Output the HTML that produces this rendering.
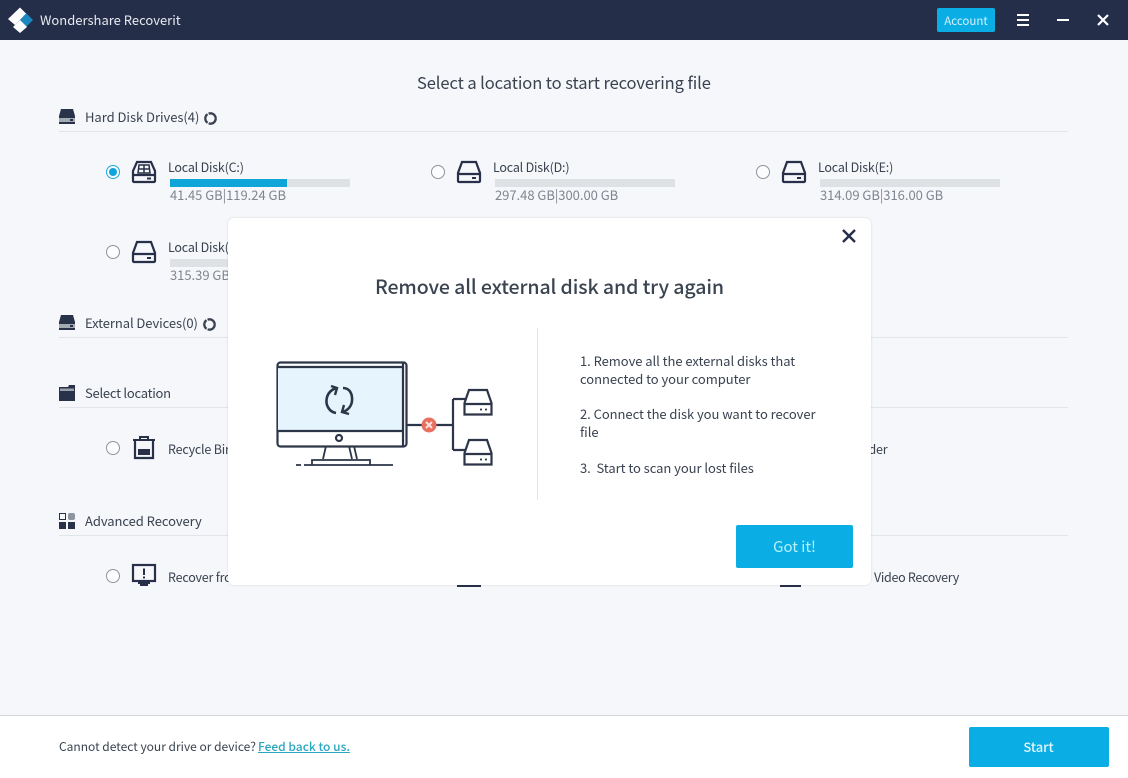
<!DOCTYPE html>
<html><head><meta charset="utf-8">
<style>
html,body{margin:0;padding:0}
body{width:1128px;height:778px;position:relative;overflow:hidden;background:#f5f7fa;font-family:"Noto Sans CJK SC","Liberation Sans",sans-serif;color:#3a4250}
.t{position:absolute;white-space:nowrap;line-height:20px;font-size:13px;letter-spacing:0}
.d{font-size:12.5px;letter-spacing:-.2px}
.g{color:#80868f}
.l{font-size:13px;letter-spacing:-.05px;left:580px}
.hl{position:absolute;left:59px;width:1009px;height:1px;background:#e1e4e8}
.bar{position:absolute;width:180px;height:8px;background:#dfe2e5}
.r{position:absolute;width:12px;height:12px;border:1px solid #8f949b;border-radius:50%;background:#fbfcfd}
svg{position:absolute;overflow:visible}
</style></head><body>

<div style="position:absolute;left:0;top:0;width:1128px;height:40px;background:#242e49"></div>
<svg style="left:0;top:0" width="40" height="40"><path d="M26 13l7 7-7 7-7-7z" fill="#1d88c0"/><path d="M20 7.500l6 6L15 25l-7-6z" fill="#fff"/><path d="M20 20l7 7-7 6-7-6z" fill="#fff"/></svg>
<div class="t" style="left:40px;top:10px;color:#e6e9ee">Wondershare Recoverit</div>
<div style="position:absolute;left:937px;top:8px;width:58px;height:24px;background:#0aaee4;border-radius:2px;color:#d8f2fb;font-size:11.500px;line-height:26px;text-align:center">Account</div>
<svg style="left:1017px;top:14px" width="12" height="12"><path d="M0 1H12M0 6H12M0 11H12" stroke="#fff" stroke-width="2"/></svg>
<div style="position:absolute;left:1057px;top:19px;width:12px;height:2px;background:#fff"></div>
<svg style="left:1097px;top:14px" width="12" height="12"><path d="M1 1L11 11M11 1L1 11" stroke="#fff" stroke-width="2.200"/></svg>

<div class="t" style="left:417px;top:71px;font-size:16.500px;letter-spacing:-.09px;line-height:22px">Select a location to start recovering file</div>

<!-- Hard disk -->
<svg style="left:59px;top:109px" width="16" height="16"><path d="M2 0H14L16 7V15H0V7Z" fill="#283248"/><rect x="0" y="9" width="16" height="4" fill="#a4aab4"/><rect x="11" y="10" width="3" height="2" fill="#283248"/></svg>
<div class="t" style="left:85px;top:107px;letter-spacing:-.03px">Hard Disk Drives(4)</div>
<svg style="left:204px;top:112px" width="13" height="13"><circle cx="6.500" cy="6.500" r="5.200" fill="none" stroke="#39404f" stroke-width="2.300" stroke-dasharray="10 1.200"/></svg>
<div class="hl" style="top:131px"></div>

<div class="r" style="left:106px;top:165px;border-color:#1fa9d8"></div>
<div style="position:absolute;left:109px;top:168px;width:8px;height:8px;border-radius:50%;background:#0fa5da"></div>
<svg style="left:132px;top:161px" width="24" height="22"><path d="M5 1H19L23 10V20A1 1 0 0 1 22 21H2A1 1 0 0 1 1 20V10Z" fill="none" stroke="#273048" stroke-width="2.200"/><path d="M1 14H23" stroke="#273048" stroke-width="2.200"/><path d="M7 4H17L18 12H6ZM12 4V12M6.500 8H17.500" fill="none" stroke="#273048" stroke-width="1.500"/><rect x="15" y="16.500" width="4" height="2" fill="#273048"/></svg>
<div class="t d" style="left:168px;top:157px">Local Disk(C:)</div>
<div class="bar" style="left:170px;top:179px"></div>
<div style="position:absolute;left:170px;top:179px;width:117px;height:8px;background:#0fa5d8"></div>
<div class="t g" style="left:170px;top:185px;letter-spacing:-.03px">41.45 GB|119.24 GB</div>

<div class="r" style="left:431px;top:165px"></div>
<svg style="left:457px;top:161px" width="24" height="22"><path d="M5 1H19L23 12V20A1 1 0 0 1 22 21H2A1 1 0 0 1 1 20V12Z" fill="none" stroke="#273048" stroke-width="2.200"/><path d="M1 13H23" stroke="#273048" stroke-width="2.200"/><rect x="15" y="16" width="4" height="2" fill="#273048"/></svg>
<div class="t d" style="left:493px;top:157px">Local Disk(D:)</div>
<div class="bar" style="left:495px;top:179px"></div>
<div class="t g" style="left:495px;top:185px;letter-spacing:-.03px">297.48 GB|300.00 GB</div>

<div class="r" style="left:756px;top:165px"></div>
<svg style="left:782px;top:161px" width="24" height="22"><path d="M5 1H19L23 12V20A1 1 0 0 1 22 21H2A1 1 0 0 1 1 20V12Z" fill="none" stroke="#273048" stroke-width="2.200"/><path d="M1 13H23" stroke="#273048" stroke-width="2.200"/><rect x="15" y="16" width="4" height="2" fill="#273048"/></svg>
<div class="t d" style="left:818px;top:157px">Local Disk(E:)</div>
<div class="bar" style="left:820px;top:179px"></div>
<div class="t g" style="left:820px;top:185px;letter-spacing:-.03px">314.09 GB|316.00 GB</div>

<div class="r" style="left:106px;top:245px"></div>
<svg style="left:132px;top:241px" width="24" height="22"><path d="M5 1H19L23 12V20A1 1 0 0 1 22 21H2A1 1 0 0 1 1 20V12Z" fill="none" stroke="#273048" stroke-width="2.200"/><path d="M1 13H23" stroke="#273048" stroke-width="2.200"/><rect x="15" y="16" width="4" height="2" fill="#273048"/></svg>
<div class="t d" style="left:168px;top:237px">Local Disk(F:)</div>
<div class="bar" style="left:170px;top:259px"></div>
<div class="t g" style="left:170px;top:265px;letter-spacing:-.03px">315.39 GB</div>

<!-- External -->
<svg style="left:59px;top:315px" width="16" height="16"><path d="M2 0H14L16 7V15H0V7Z" fill="#283248"/><rect x="0" y="9" width="16" height="4" fill="#a4aab4"/><rect x="11" y="10" width="3" height="2" fill="#283248"/></svg>
<div class="t" style="left:85px;top:313px;letter-spacing:-.08px">External Devices(0)</div>
<svg style="left:203px;top:318px" width="13" height="13"><circle cx="6.500" cy="6.500" r="5.200" fill="none" stroke="#39404f" stroke-width="2.300" stroke-dasharray="10 1.200"/></svg>
<div class="hl" style="top:337px"></div>

<!-- Select location -->
<svg style="left:59px;top:385px" width="16" height="16"><path d="M0 2H9L10 0H16V16H0Z" fill="#283248"/><rect x="1" y="3.500" width="14" height="2.500" fill="#9aa1ac"/></svg>
<div class="t" style="left:85px;top:383px;letter-spacing:-.25px">Select location</div>
<div class="hl" style="top:407px"></div>
<div class="r" style="left:106px;top:441px"></div>
<svg style="left:132px;top:436px" width="24" height="24"><path d="M1 4H23M8 4V1H16V4" fill="none" stroke="#273048" stroke-width="2"/><path d="M3 4V22H21V4" fill="none" stroke="#273048" stroke-width="2.200"/><rect x="6" y="13" width="12" height="6" fill="#273048"/></svg>
<div class="t d" style="left:168px;top:439px">Recycle Bin</div>
<div class="t d" style="left:814px;top:439px">Select Folder</div>

<!-- Advanced -->
<svg style="left:59px;top:513px" width="16" height="16"><rect x=".5" y=".5" width="6" height="6" fill="none" stroke="#283248"/><rect x="9" y="0" width="7" height="7" rx="2" fill="#8f95a0"/><rect x="0" y="9" width="7" height="7" fill="#283248"/><rect x="9" y="9" width="7" height="7" fill="#283248"/></svg>
<div class="t" style="left:85px;top:511px;letter-spacing:-.06px">Advanced Recovery</div>
<div class="hl" style="top:535px"></div>
<div class="r" style="left:106px;top:569px"></div>
<svg style="left:132px;top:564px" width="24" height="23"><rect x="1" y="1" width="22" height="16" fill="none" stroke="#273048" stroke-width="2.200"/><path d="M12 4.500V11M12 12.500V14.500" stroke="#273048" stroke-width="2"/><path d="M6 19H18M8 21H16" stroke="#273048" stroke-width="2"/></svg>
<div class="t d" style="left:168px;top:567px">Recover from</div>
<div style="position:absolute;left:457px;top:585px;width:24px;height:2px;background:#273048"></div>
<div style="position:absolute;left:780px;top:585px;width:21px;height:2px;background:#273048"></div>
<div class="t" style="left:874px;top:567px;font-size:12.500px;letter-spacing:-.3px">Video Recovery</div>

<!-- Footer -->
<div style="position:absolute;left:0;top:715px;width:1128px;height:63px;background:#fff;border-top:1px solid #d6d8dc;box-sizing:border-box"></div>
<div class="t" style="left:59px;top:737px;font-size:12px">Cannot detect your drive or device?</div>
<div class="t" style="left:258px;top:737px;font-size:12px;letter-spacing:0;color:#2ba6bf;text-decoration:underline;font-weight:500">Feed back to us.</div>
<div style="position:absolute;left:969px;top:727px;width:139px;height:40px;padding-right:1px;background:#0aaee4;border-radius:2px;color:#e4f7fd;font-size:13px;font-weight:500;line-height:40px;text-align:center">Start</div>

<!-- Modal -->
<div style="position:absolute;left:228px;top:218px;width:643px;height:367px;background:#fff;border-radius:6px;box-shadow:0 0 2px rgba(0,0,0,.14)"></div>
<svg style="left:842px;top:229px" width="14" height="14"><path d="M1 1L13 13M13 1L1 13" stroke="#273048" stroke-width="2.400"/></svg>
<div class="t" style="left:375px;top:273px;font-size:19.500px;line-height:26px;font-weight:500;letter-spacing:-.1px;color:#3a4350">Remove all external disk and try again</div>
<div style="position:absolute;left:537px;top:328px;width:1px;height:172px;background:#e3e5e8"></div>

<svg style="left:0;top:0" width="1128" height="778" fill="none" stroke="#2d3648" stroke-width="2.200">
<rect x="277.500" y="362.500" width="129" height="84" rx="3" fill="#fff"/>
<rect x="278" y="367" width="125" height="64" fill="#e5f4fd" stroke="none"/>
<path d="M277.500 367H403M277.500 431H403M403 363V446" />
<circle cx="339" cy="438" r="3"/>
<path d="M326 446L323 459M354 446L357 459M349 446L352 459" stroke-width="1.800"/>
<path d="M312 465V460H370V465" stroke-width="1.800"/>
<path d="M296 465H301M304 465H393" stroke-width="1.800"/>
<path d="M407 425H453M453 399V450M453 399H465M453 450H465"/>
<circle cx="429" cy="425" r="7.500" fill="#e8705f" stroke="none"/>
<path d="M426 422L432 428M432 422L426 428" stroke="#fbe3df" stroke-width="2"/>
<path d="M469 390H487L491.500 403V414.500H464.500V403Z" fill="#fff"/>
<path d="M465 404H491"/>
<path d="M480 409.500H482M485 409.500H487" stroke-width="1.800"/>
<path d="M469 440H487L491.500 453V464.500H464.500V453Z" fill="#fff"/>
<path d="M465 454H491"/>
<path d="M480 459.500H482M485 459.500H487" stroke-width="1.800"/>
<path d="M343 388C351 388 352.500 396 352 401C351.500 406 348 410 343 412" stroke-width="2.600"/>
<path d="M336 413C329 412 326 405 326.500 400C327 394 331 390 336 388" stroke-width="2.600"/>
<path d="M331 386L337 388L335 395M349 414L342 412L344 405" stroke-width="2.400"/>
</svg>

<div class="t l" style="top:351px">1. Remove all the external disks that</div>
<div class="t l" style="top:369px">connected to your computer</div>
<div class="t l" style="top:404px">2. Connect the disk you want to recover</div>
<div class="t l" style="top:422px">file</div>
<div class="t l" style="top:458px">3.&nbsp; Start to scan your lost files</div>
<div style="position:absolute;left:736px;top:525px;width:117px;height:43px;background:#0aaee4;border-radius:2px;color:#b9f0fb;font-size:15px;line-height:44px;text-align:center">Got it!</div>

</body></html>
